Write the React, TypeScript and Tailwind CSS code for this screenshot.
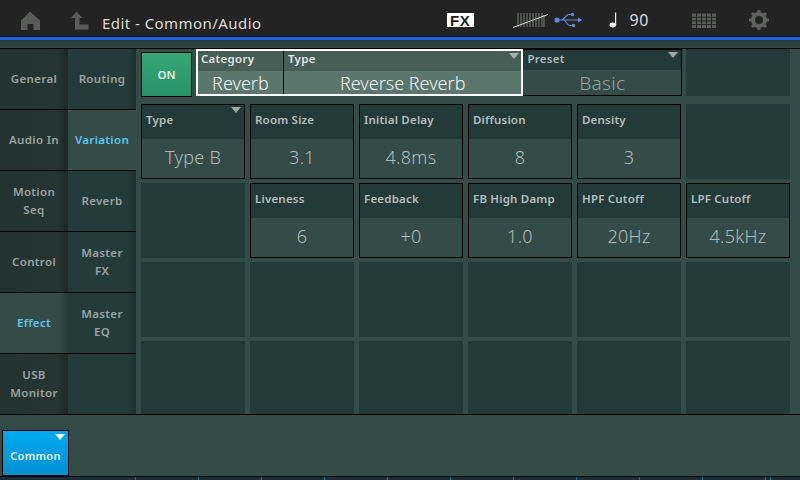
const sans = "font-['Noto_Sans','Open_Sans',sans-serif]";

function Side({ label, active, col }: { label: string; active?: boolean; col: 1 | 2 }) {
  const bg = active
    ? col === 1
      ? 'bg-[linear-gradient(90deg,#334c48_0,#334c48_88%,#263a37_100%)]'
      : 'bg-[#334c48]'
    : col === 1
      ? 'bg-[linear-gradient(90deg,#233330_0,#243532_85%,#1b2725_100%)]'
      : 'bg-[linear-gradient(90deg,#243c39_0,#243c39_88%,#1d2e2c_100%)]';
  return (
    <div
      className={`h-[61px] pb-[1px] border-b border-black flex items-center justify-center text-center text-[11.5px] font-semibold leading-[18px] tracking-[0.35px] whitespace-pre-line ${bg} ${active ? 'text-[#5cc4f2]' : 'text-[#9da2a0]'}`}
    >
      {label}
    </div>
  );
}

function Cell({ label, value, arrow }: { label: string; value: string; arrow?: boolean }) {
  return (
    <div className="relative h-[75px] border border-black flex flex-col">
      <div className="h-[34px] bg-[#223a38] pl-[4px] pt-[6px] text-[11.5px] leading-[18px] font-semibold tracking-[0.2px] text-[#b8bdbb]">{label}</div>
      <div className="flex-1 pb-[3px] bg-[#334c48] flex items-center justify-center text-[18px] leading-none font-light tracking-[0.3px] text-[#b4b9b7]">{value}</div>
      {arrow && <Tri className="absolute right-[3px] top-[2px] border-t-[#a5a5a5]" />}
    </div>
  );
}

function Tri({ className }: { className: string }) {
  return <div className={`w-0 h-0 border-x-[5px] border-x-transparent border-t-[6px] ${className}`} />;
}

const Empty = () => <div className="h-[75px] bg-[#233a38]" />;

export default function App() {
  return (
    <div className={`${sans} w-[800px] h-[480px] overflow-hidden flex flex-col bg-[#334c48]`}>
      <header className="h-[36px] pt-[4px] bg-[#222322] flex items-center shrink-0 relative">
        <svg className="ml-[20px]" width="20" height="19" viewBox="0 0 20 19">
          <path d="M10 0.5 L20 9.5 V19 H13.5 V13 H7.5 V19 H1 V9.5 Z" fill="#5a5c5a" />
        </svg>
        <svg className="ml-[31px]" width="18" height="19" viewBox="0 0 18 19">
          <path d="M5.5 0.5 L11.5 7 H8.5 V13.5 H17.5 V18.5 H4 V7 H0 Z" fill="#5a5c5a" />
        </svg>
        <span className="ml-[13px] mt-[6px] text-[15px] tracking-[0.45px] text-[#dcdcdc] leading-none">Edit - Common/Audio</span>
        <div className="ml-[185px] bg-white h-[14px] w-[27px] flex items-center justify-center text-[15px] leading-none font-bold text-[#222] tracking-[0.5px] font-['Liberation_Sans',sans-serif]">FX</div>
        <svg className="ml-[39px]" width="36" height="16" viewBox="0 0 36 16">
          <path d="M5 1V15M8 1V15M11 1V15M14 1V15M17 1V15M20 1V15M23 1V15M26 1V15M29 1V15M31 3V15" stroke="#5a5c5a" strokeWidth="1.6" />
          <path d="M0 15.5 L35 2.5" stroke="#e0e0e0" strokeWidth="1" />
        </svg>
        <svg className="ml-[5px]" width="30" height="16" viewBox="0 0 30 16">
          <circle cx="3" cy="8" r="2.6" fill="#5b8bdc" />
          <path d="M3 8H26M8 8L14 2.5H18M10 8L15 13.5H19" stroke="#5b8bdc" strokeWidth="1.1" fill="none" />
          <path d="M24 5.5L28.5 8L24 10.5Z" fill="#5b8bdc" />
          <circle cx="18.5" cy="2.5" r="1.8" fill="#5b8bdc" />
          <circle cx="19.5" cy="13.5" r="1.8" fill="#5b8bdc" />
        </svg>
        <svg className="ml-[25px]" width="9" height="16" viewBox="0 0 9 16">
          <path d="M6.6 0.5V13" stroke="#eee" strokeWidth="1.2" />
          <ellipse cx="3.8" cy="13" rx="3.3" ry="2.4" fill="#eee" />
        </svg>
        <span className="ml-[12px] text-[16px] text-[#dcdcdc] leading-none tracking-[0.4px]">90</span>
        <svg className="ml-[43px]" width="24" height="15" viewBox="0 0 24 15">
          <path d="M0 0.5H24V15H0Z" fill="#5a5c5a" />
          <path d="M0 4.2H24M0 7.9H24M0 11.6H24M4.5 0V15M9.5 0V15M14.5 0V15M19.5 0V15" stroke="#222322" strokeWidth="1" />
        </svg>
        <svg className="ml-[33px]" width="20" height="20" viewBox="0 0 20 20">
          <circle cx="10" cy="10" r="6" fill="none" stroke="#5f615f" strokeWidth="4" />
          <path d="M10 0V20M0 10H20M3 3L17 17M17 3L3 17" stroke="#5f615f" strokeWidth="3" strokeDasharray="3 14" />
        </svg>
      </header>
      <div className="h-[4px] shrink-0 border-t border-black bg-[#1465e0]" />
      <div className="h-[8px] shrink-0 bg-[linear-gradient(180deg,#233a37,#30473f)]" />
      <div className="flex h-[367px] shrink-0 border-t border-black">
        <nav className="w-[68px] shrink-0">
          {['General', 'Audio In', 'Motion\nSeq', 'Control', 'Effect', 'USB\nMonitor'].map((l) => (
            <Side key={l} label={l} col={1} active={l === 'Effect'} />
          ))}
        </nav>
        <nav className="w-[68px] shrink-0">
          {['Routing', 'Variation', 'Reverb', 'Master\nFX', 'Master\nEQ', ''].map((l, i) => (
            <Side key={i} label={l} col={2} active={l === 'Variation'} />
          ))}
        </nav>
        <main className="flex-1 pl-[5px] pr-[10px] flex flex-col overflow-hidden border-b border-black">
          <div className="flex h-[48px] shrink-0">
            <div className="w-[51px] h-[45px] mt-[3px] border border-black bg-[linear-gradient(180deg,#35a877,#2a9166)] flex items-center justify-center text-[11.5px] font-semibold text-[#e6f2ec]">ON</div>
            <div className="ml-[4px] w-[328px] h-[47px] border-2 border-white flex relative">
              <div className="w-[86px] flex flex-col border-r border-black">
                <div className="h-[20px] bg-[#465e56] pl-[3px] text-[11.5px] leading-[15px] font-semibold tracking-[0.3px] text-[#e4e8e6]">Category</div>
                <div className="flex-1 bg-[#5b766c] flex items-center justify-center text-[18px] leading-none font-light text-[#f2f4f3]">Reverb</div>
              </div>
              <div className="flex-1 flex flex-col">
                <div className="h-[20px] bg-[#465e56] pl-[4px] text-[11.5px] leading-[15px] font-semibold tracking-[0.3px] text-[#e4e8e6]">Type</div>
                <div className="flex-1 bg-[#5b766c] flex items-center justify-center text-[18px] leading-none font-light text-[#f2f4f3]">Reverse Reverb</div>
              </div>
              <Tri className="absolute right-[2px] top-[2px] border-t-[#a8b0ac]" />
            </div>
            <div className="relative w-[159px] h-[47px] border-y border-r border-black flex flex-col">
              <div className="h-[20px] bg-[#223a38] pl-[4px] text-[11.5px] leading-[17px] font-semibold tracking-[0.3px] text-[#b4b9b7]">Preset</div>
              <div className="flex-1 pt-[2px] bg-[#334c48] flex items-center justify-center text-[19px] leading-none font-light tracking-[0.3px] text-[#9aa19f]">Basic</div>
              <Tri className="absolute right-[3px] top-[2px] border-t-[#a5a5a5]" />
            </div>
            <div className="ml-[4px] w-[104px] h-[47px] bg-[#233a38]" />
          </div>
          <div className="grid grid-cols-[repeat(6,104px)] gap-x-[5px] gap-y-[4px] mt-[7px]">
            <Cell label="Type" value="Type B" arrow />
            <Cell label="Room Size" value="3.1" />
            <Cell label="Initial Delay" value="4.8ms" />
            <Cell label="Diffusion" value="8" />
            <Cell label="Density" value="3" />
            <Empty />
            <Empty />
            <Cell label="Liveness" value="6" />
            <Cell label="Feedback" value="+0" />
            <Cell label="FB High Damp" value="1.0" />
            <Cell label="HPF Cutoff" value="20Hz" />
            <Cell label="LPF Cutoff" value="4.5kHz" />
            {Array.from({ length: 12 }, (_, i) => (
              <Empty key={i} />
            ))}
          </div>
        </main>
      </div>
      <div className="h-[61px] shrink-0 pl-[2px] pt-[15px] bg-[#334c48] flex items-start">
        <div className="relative w-[67px] h-[46px] border border-black bg-[linear-gradient(180deg,#00aaf0,#0090d0)] flex items-center justify-center pt-[6px] text-[11px] font-semibold tracking-[0.3px] text-[#e8f6fc]">
          Common
          <Tri className="absolute right-[3px] top-[3px] border-t-white" />
        </div>
      </div>
      <div className="flex-1 bg-[#1a2e38] border-t border-black pl-[135px] flex">
        {Array.from({ length: 10 }, (_, i) => (
          <div key={i} className="w-[63px] h-full border-l border-[#1f6f9a]" />
        ))}
        <div className="w-[5px] h-full border-l border-[#1f6f9a]" />
        <div className="w-[5px] h-full border-l border-[#1f6f9a]" />
      </div>
    </div>
  );
}
